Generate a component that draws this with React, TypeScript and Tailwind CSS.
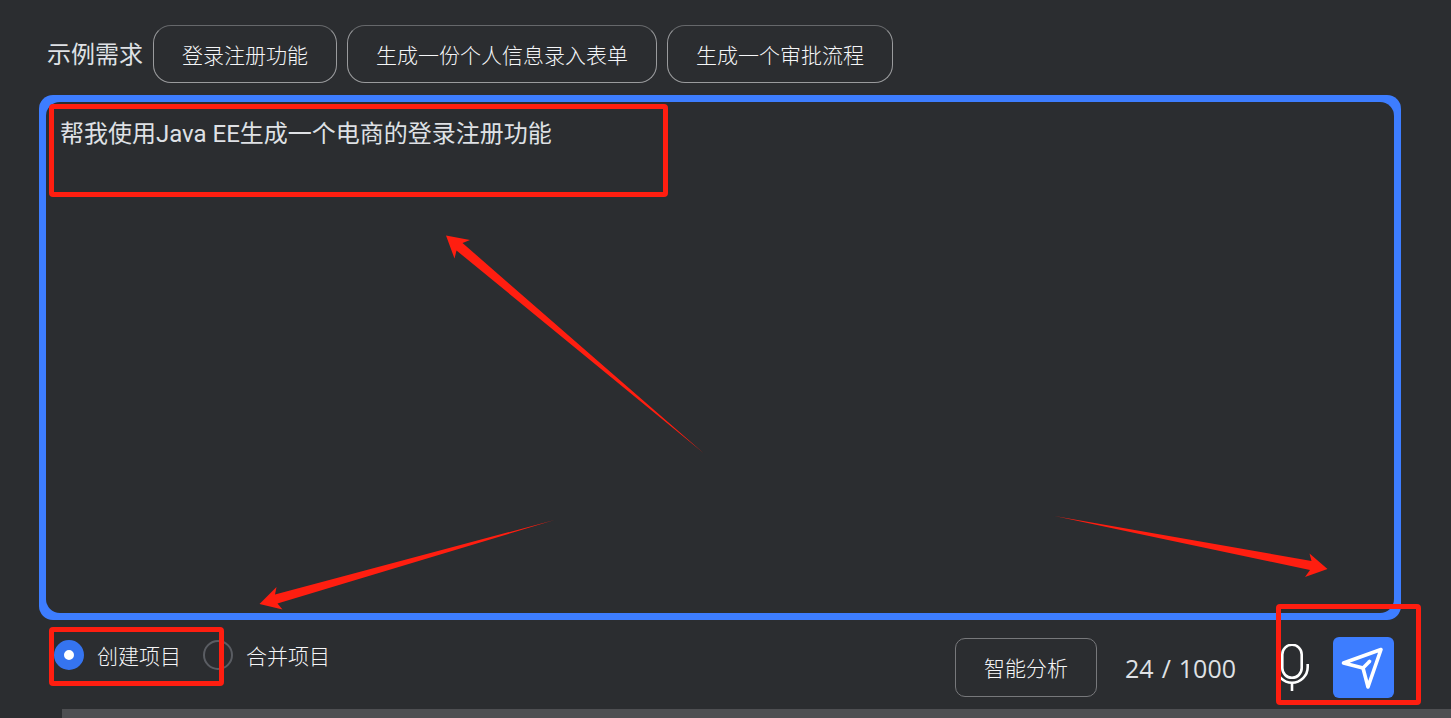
import { useState } from 'react'
import { clsx } from 'clsx'

const examples = ['登录注册功能', '生成一份个人信息录入表单', '生成一个审批流程']

const modes = [
  { value: 'create', label: '创建项目' },
  { value: 'merge', label: '合并项目' },
]

const MAX_LENGTH = 1000

function Highlight({ className }: { className: string }) {
  return (
    <div
      className={clsx('absolute pointer-events-none border-5 border-[#ff1e10] rounded-sm', className)}
    />
  )
}

function Arrows() {
  return (
    <svg
      viewBox="0 0 1361 525"
      className="absolute inset-0 w-full h-full pointer-events-none"
      fill="#ff1e10"
      aria-hidden="true"
    >
      <path d="M406.5 140.5 L430.5 145 L423 148 L664 358 L417 155.5 L415 163.5 Z" />
      <path d="M220 509 L237 492 L235.5 499.5 L515 425 L238 508.5 L243 514.5 Z" />
      <path d="M1288 474 L1270 458.5 L1272 466 L1015 421 L1270.5 475 L1265.5 482 Z" />
    </svg>
  )
}

function MicIcon() {
  return (
    <svg viewBox="0 0 34 48" className="w-[34px] h-12" fill="none" stroke="white" strokeWidth="2.6" aria-hidden="true">
      <rect x="6.3" y="0.8" width="19.4" height="33" rx="9.7" />
      <path d="M0.3 20 v3 a15.7 15.7 0 0 0 31.4 0 v-3" />
      <path d="M16 38.5 V47" />
    </svg>
  )
}

function SendIcon() {
  return (
    <svg
      viewBox="0 0 61 61"
      className="w-full h-full"
      fill="none"
      stroke="white"
      strokeWidth="3.6"
      strokeLinecap="round"
      strokeLinejoin="round"
      aria-hidden="true"
    >
      <path d="M10.5 26 L48 12.5 L35 50 L30 31 Z" />
      <path d="M30 31 L36.5 24.5" />
    </svg>
  )
}

export default function App() {
  const [prompt, setPrompt] = useState('帮我使用Java EE生成一个电商的登录注册功能')
  const [mode, setMode] = useState('create')

  return (
    <div className="min-h-screen flex flex-col bg-[#2b2d30] text-[#dfe1e5] font-['Open_Sans','Noto_Sans_CJK_SC',sans-serif]">
      <div className="flex-1 flex flex-col pl-[39px] pr-[50px] pt-[25px] pb-[11px]">
        {/* Example prompts */}
        <div className="flex items-center gap-[10px] pl-2 mb-3">
          <span className="text-2xl">示例需求</span>
          {examples.map((example) => (
            <button
              key={example}
              type="button"
              onClick={() => setPrompt(example)}
              className="h-[58px] px-7 pt-[3px] border border-[#9a9b9d] border-t-[#66686b] rounded-[18px] text-[21px] font-light text-[#f5f6f8]"
            >
              {example}
            </button>
          ))}
        </div>

        {/* Prompt editor */}
        <div className="relative flex-1 flex mb-[17px] p-[7px] bg-[#3d7dff] rounded-[14px]">
          <textarea
            aria-label="需求"
            value={prompt}
            maxLength={MAX_LENGTH}
            onChange={(e) => setPrompt(e.target.value)}
            className="w-full resize-none bg-[#2b2d30] rounded-[14px] px-[14px] py-4 text-2xl leading-8 outline-none font-['Roboto','Noto_Sans_CJK_SC',sans-serif]"
          />
          <Highlight className="left-[10px] top-[9px] w-[619px] h-[93px]" />
          <Arrows />
        </div>

        {/* Mode and actions */}
        <div className="flex items-start justify-between pr-[7px]">
          <div className="relative flex gap-[22px] pl-[15px] pt-[2px]">
            {modes.map((item) => (
              <label
                key={item.value}
                className="flex items-center gap-[13px] text-[21px] leading-[30px] font-light text-[#f5f6f8]"
              >
                <input
                  type="radio"
                  name="mode"
                  value={item.value}
                  checked={mode === item.value}
                  onChange={() => setMode(item.value)}
                  className="appearance-none size-[30px] rounded-full border-2 border-[#5a5d63] checked:border-[10px] checked:border-[#3574f0] checked:bg-white"
                />
                <span className="pt-[2px]">{item.label}</span>
              </label>
            ))}
            <Highlight className="left-[10px] -top-[10px] w-[175px] h-[59px]" />
          </div>

          <div className="relative flex items-center">
            <button
              type="button"
              className="h-[59px] px-7 pt-[3px] border border-[#77787b] rounded-[10px] text-[21px] font-light text-[#f5f6f8]"
            >
              智能分析
            </button>
            <span className="flex gap-2 ml-7 pt-[2px] text-[25px]">
              <span>24</span>
              <span>/</span>
              <span>{MAX_LENGTH}</span>
            </span>
            <button type="button" aria-label="语音" className="ml-10">
              <MicIcon />
            </button>
            <button type="button" aria-label="发送" className="ml-[23px] size-[61px] rounded-md bg-[#3d7dff]">
              <SendIcon />
            </button>
            <Highlight className="-right-[27px] -top-[33px] w-[145px] h-[101px]" />
          </div>
        </div>
      </div>

      {/* Scrollbar */}
      <div className="h-[9px] ml-[62px] bg-[#4e4f52]" />
    </div>
  )
}
